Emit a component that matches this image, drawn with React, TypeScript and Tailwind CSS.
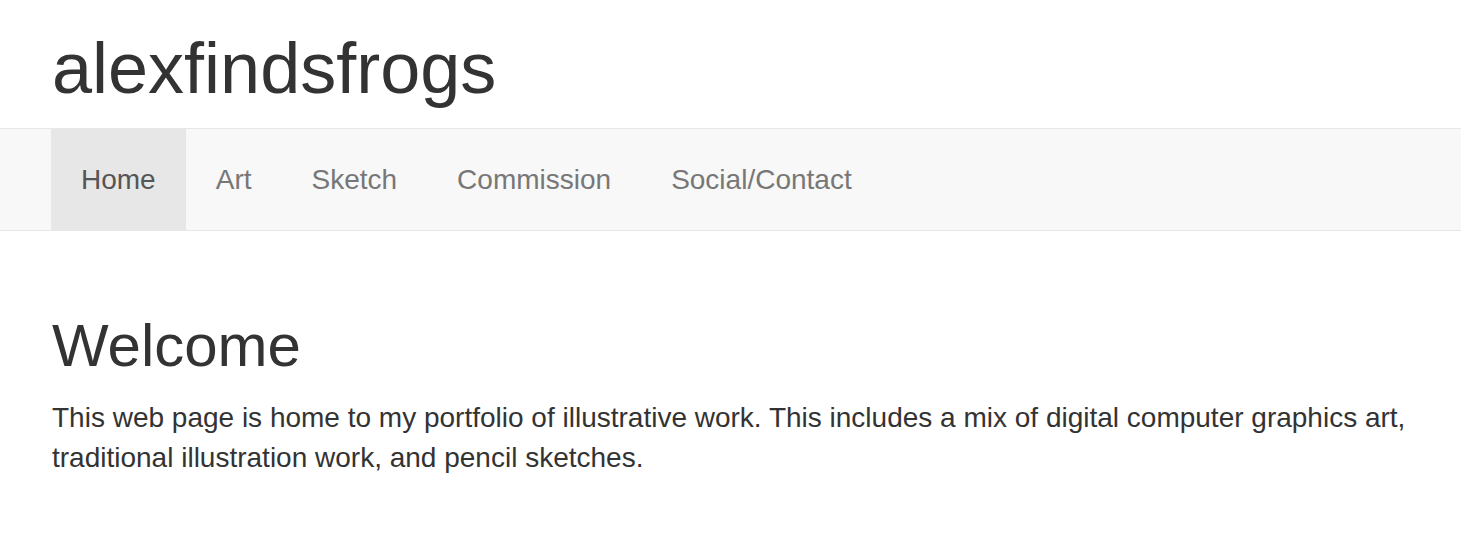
import React from "react";

const items = ["Home", "Art", "Sketch", "Commission", "Social/Contact"];

export default function App() {
  return (
    <div
      className="w-full min-h-[553px] bg-white text-[#333]"
      style={{ fontFamily: '"Liberation Sans", Arial, Helvetica, sans-serif' }}
    >
      <header className="pl-[52px] pt-[28px] pb-[20px]">
        <h1 className="text-[72px] leading-[80px] font-normal text-[#333] m-0">alexfindsfrogs</h1>
      </header>
      <nav className="bg-[#f8f8f8] border-y border-[#e7e7e7]">
        <ul className="flex h-[101px] pl-[51px] m-0 list-none">
          {items.map((it, i) => (
            <li key={it} className="h-full">
              <a
                href="#"
                className={
                  i === 0
                    ? "flex h-full items-center px-[30px] text-[28px] leading-[40px] text-[#555] bg-[#e7e7e7]"
                    : "flex h-full items-center px-[30px] text-[28px] leading-[40px] text-[#777]"
                }
              >
                {it}
              </a>
            </li>
          ))}
        </ul>
      </nav>
      <main className="pl-[52px] pr-[40px] pt-[82px]">
        <h2 className="text-[60px] leading-[66px] font-normal m-0">Welcome</h2>
        <p className="mt-[19px] text-[28px] leading-[40px] m-0">
          This web page is home to my portfolio of illustrative work. This includes a mix of digital computer graphics art,
          traditional illustration work, and pencil sketches.
        </p>
      </main>
    </div>
  );
}
